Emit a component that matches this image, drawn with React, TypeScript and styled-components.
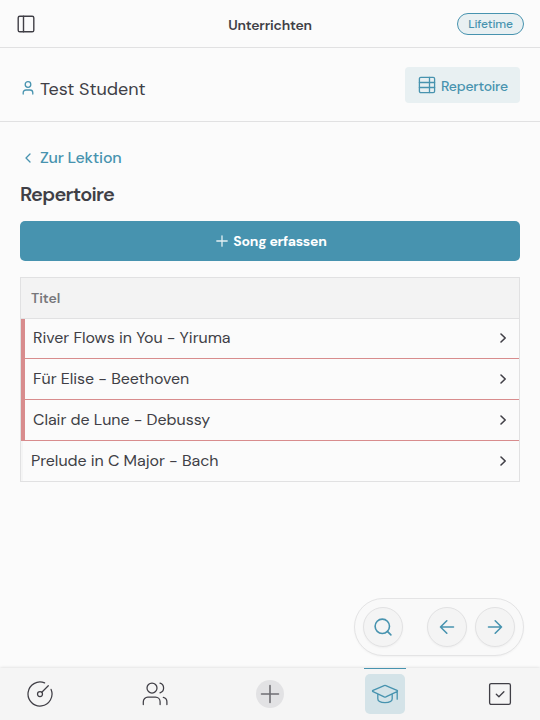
import React from "react";
import styled, { createGlobalStyle } from "styled-components";

const teal = "#4793af";
const ink = "#403f46";
const line = "#e1e1e2";

const GlobalStyle = createGlobalStyle`
  * { box-sizing: border-box; }
  body {
    margin: 0;
    background: #fbfbfb;
    color: ${ink};
    font-family: "DM Sans", Inter, "Liberation Sans", sans-serif;
  }
  button { font: inherit; color: inherit; border: 0; background: none; padding: 0; }
`;

const Page = styled.div`
  display: flex;
  flex-direction: column;
  height: 720px;
  width: 540px;
  overflow: hidden;
`;

const Label = styled.span<{ $size: number; $weight?: number; $spacing?: number; $color?: string; $drop?: number }>`
  font-size: ${(p) => p.$size}px;
  font-weight: ${(p) => p.$weight ?? 400};
  letter-spacing: ${(p) => p.$spacing ?? 0}px;
  color: ${(p) => p.$color ?? "inherit"};
  line-height: 20px;
  padding-top: ${(p) => p.$drop ?? 0}px;
  white-space: nowrap;
`;

const Icon = styled.svg<{ $color?: string; $stroke?: number }>`
  display: block;
  flex: none;
  fill: none;
  stroke: ${(p) => p.$color ?? ink};
  stroke-width: ${(p) => p.$stroke ?? 1.3};
  stroke-linecap: round;
  stroke-linejoin: round;
`;

const TopBar = styled.header`
  display: grid;
  grid-template-columns: 1fr auto 1fr;
  align-items: center;
  height: 48px;
  padding: 2px 16px 0;
  border-bottom: 1px solid ${line};
`;

const SidebarButton = styled.button`
  justify-self: start;
  margin-top: -1px;
`;

const Badge = styled.span`
  justify-self: end;
  display: flex;
  align-items: center;
  justify-content: center;
  width: 67px;
  height: 22px;
  margin-top: -2px;
  border: 1px solid ${teal};
  border-radius: 11px;
  background: #e9f0f2;
`;

const StudentBar = styled.section`
  display: flex;
  justify-content: space-between;
  height: 74px;
  padding: 19px 20px 0;
  border-bottom: 1px solid ${line};
`;

const StudentName = styled.div`
  display: flex;
  align-items: center;
  gap: 4px;
  height: 42px;
`;

const RepertoireButton = styled.button`
  display: flex;
  align-items: center;
  gap: 5px;
  width: 115px;
  height: 36px;
  padding-left: 13px;
  border-radius: 4px;
  background: #e8f0f2;
`;

const Content = styled.main`
  flex: 1;
  padding: 26px 20px 0;
`;

const BackLink = styled.a`
  display: flex;
  align-items: center;
  gap: 4px;
  height: 20px;
`;

const Heading = styled.h1`
  display: flex;
  align-items: center;
  margin: 15px 0 0;
  height: 22px;
`;

const AddButton = styled.button`
  display: flex;
  align-items: center;
  justify-content: center;
  gap: 4px;
  width: 100%;
  height: 40px;
  margin-top: 16px;
  padding-left: 2px;
  border-radius: 5px;
  background: ${teal};
`;

const Table = styled.div`
  margin-top: 16px;
  border: 1px solid ${line};
`;

const TableHead = styled.div`
  display: flex;
  align-items: center;
  height: 41px;
  padding: 0 10px 1px;
  border-bottom: 1px solid ${line};
  background: #f3f3f3;
`;

const TableRow = styled.div<{ $marked: boolean; $first: boolean }>`
  display: flex;
  align-items: center;
  justify-content: space-between;
  height: ${(p) => (p.$first || !p.$marked ? 40 : 41)}px;
  padding: 0 8px ${(p) => (p.$first ? 1 : 0)}px;
  border-left: ${(p) => (p.$marked ? "4px solid #d88c8d" : "2px solid #f5f5f5")};
  border-bottom: ${(p) => (p.$marked ? "1px solid #d88c8d" : "0")};
`;

const Dock = styled.div`
  align-self: flex-end;
  display: flex;
  align-items: center;
  width: 170px;
  height: 58px;
  margin: 0 16px 12px 0;
  padding: 0 8px;
  gap: 8px;
  border: 1px solid #e4e4e5;
  border-radius: 29px;
  background: #f9f9f9;
  box-shadow: 0 1px 2px rgba(0, 0, 0, 0.04);
`;

const RoundButton = styled.button<{ $gap?: boolean }>`
  display: flex;
  align-items: center;
  justify-content: center;
  flex: none;
  width: 40px;
  height: 40px;
  margin-right: ${(p) => (p.$gap ? 16 : 0)}px;
  border: 1px solid #e2e2e3;
  border-radius: 50%;
  background: #f4f4f4;
  box-shadow: 0 1px 2px rgba(0, 0, 0, 0.04);
`;

const TabBar = styled.nav`
  display: flex;
  justify-content: space-between;
  height: 52px;
  padding: 0 19px;
  background: #f5f5f5;
  box-shadow: 0 0 3px rgba(0, 0, 0, 0.16);
`;

const Tab = styled.button<{ $active?: boolean }>`
  display: flex;
  justify-content: center;
  width: 42px;
  height: 52px;
  padding-top: ${(p) => (p.$active ? 5 : 6)}px;
  border-top: ${(p) => (p.$active ? `1px solid ${teal}` : "0")};
`;

const TabFace = styled.span<{ $kind?: "active" | "add" }>`
  display: flex;
  align-items: center;
  justify-content: center;
  width: ${(p) => (p.$kind === "add" ? 28 : 40)}px;
  height: ${(p) => (p.$kind === "add" ? 28 : 40)}px;
  margin-top: ${(p) => (p.$kind === "add" ? 6 : 0)}px;
  border-radius: ${(p) => (p.$kind === "add" ? "50%" : "5px")};
  background: ${(p) => (p.$kind === "active" ? "#d4e3e8" : p.$kind === "add" ? "#e2e2e4" : "transparent")};
`;

const songs = [
  { title: "River Flows in You - Yiruma", marked: true },
  { title: "Für Elise - Beethoven", marked: true },
  { title: "Clair de Lune - Debussy", marked: true },
  { title: "Prelude in C Major - Bach", marked: false },
];

export default function App() {
  return (
    <>
      <GlobalStyle />
      <Page>
        <TopBar>
          <SidebarButton aria-label="Menu">
            <Icon width="20" height="20" viewBox="0 0 20 20" $stroke={1.4}>
              <rect x="2.2" y="2.2" width="15.6" height="15.6" rx="1.6" />
              <path d="M7.5 2.2v15.6" />
            </Icon>
          </SidebarButton>
          <Label $size={14} $weight={600} $spacing={-0.2} $drop={1}>Unterrichten</Label>
          <Badge><Label $size={12} $weight={500} $spacing={-0.15} $color={teal} $drop={1}>Lifetime</Label></Badge>
        </TopBar>

        <StudentBar>
          <StudentName>
            <Icon width="16" height="16" viewBox="0 0 16 16" $color={teal}>
              <circle cx="8" cy="4.5" r="2.8" />
              <path d="M3.2 14v-1.2a2.8 2.8 0 0 1 2.8-2.8h4a2.8 2.8 0 0 1 2.8 2.8V14" />
            </Icon>
            <Label $size={18} $spacing={-0.03} $drop={2}>Test Student</Label>
          </StudentName>
          <RepertoireButton>
            <Icon width="18" height="18" viewBox="0 0 18 18" $color={teal}>
              <rect x="1.4" y="1.4" width="15.2" height="15.2" rx="1.4" />
              <path d="M1.4 6.5h15.2M1.4 11.5h15.2M11.5 1.4v15.2" />
            </Icon>
            <Label $size={14} $weight={500} $spacing={-0.22} $color={teal} $drop={2}>Repertoire</Label>
          </RepertoireButton>
        </StudentBar>

        <Content>
          <BackLink>
            <Icon width="16" height="16" viewBox="0 0 16 16" $color={teal}>
              <path d="M10 4 6 8l4 4" />
            </Icon>
            <Label $size={16} $weight={500} $spacing={-0.22} $color={teal}>Zur Lektion</Label>
          </BackLink>
          <Heading><Label $size={20} $weight={600} $spacing={-0.72}>Repertoire</Label></Heading>
          <AddButton>
            <Icon width="14" height="14" viewBox="0 0 14 14" $color="#e4f0f3">
              <path d="M7 1.8v10.4M1.8 7h10.4" />
            </Icon>
            <Label $size={14} $weight={700} $spacing={-0.25} $color="#fff">Song erfassen</Label>
          </AddButton>
          <Table>
            <TableHead><Label $size={14} $weight={600} $spacing={-0.05} $color="#77777b">Titel</Label></TableHead>
            {songs.map((s, i) => (
              <TableRow key={s.title} $marked={s.marked} $first={i === 0}>
                <Label $size={16} $spacing={-0.04}>{s.title}</Label>
                <Icon width="16" height="16" viewBox="0 0 16 16" $stroke={1.6}>
                  <path d="m6 4 4.2 4L6 12" />
                </Icon>
              </TableRow>
            ))}
          </Table>
        </Content>

        <Dock>
          <RoundButton $gap aria-label="Suche">
            <Icon width="20" height="20" viewBox="0 0 20 20" $color={teal} $stroke={1.6}>
              <circle cx="9.3" cy="9.3" r="7.2" />
              <path d="m14.4 14.4 3.5 3.5" />
            </Icon>
          </RoundButton>
          <RoundButton aria-label="Zurück">
            <Icon width="20" height="20" viewBox="0 0 20 20" $color={teal} $stroke={1.6}>
              <path d="M16.5 10h-13M9.8 3.8 3.5 10l6.3 6.2" />
            </Icon>
          </RoundButton>
          <RoundButton aria-label="Weiter">
            <Icon width="20" height="20" viewBox="0 0 20 20" $color={teal} $stroke={1.6}>
              <path d="M3.5 10h13M10.2 3.8l6.3 6.2-6.3 6.2" />
            </Icon>
          </RoundButton>
        </Dock>

        <TabBar>
          <Tab>
            <TabFace>
              <Icon width="28" height="28" viewBox="0 0 28 28" $stroke={1.25}>
                <path d="M18.6 2.9A12 12 0 1 0 25.1 9.4" />
                <circle cx="14" cy="14" r="2.5" />
                <path d="m15.8 12.2 6.5-6.5" />
              </Icon>
            </TabFace>
          </Tab>
          <Tab>
            <TabFace>
              <Icon width="28" height="28" viewBox="0 0 28 28" $stroke={1.25}>
                <circle cx="11" cy="8" r="5" />
                <path d="M2.3 24.5v-2.8a4.6 4.6 0 0 1 4.6-4.6h7.6a4.6 4.6 0 0 1 4.6 4.6v2.8M19 3.2a5 5 0 0 1 0 9.6M22.3 17.3a4.6 4.6 0 0 1 3.6 4.5v2.7" />
              </Icon>
            </TabFace>
          </Tab>
          <Tab>
            <TabFace $kind="add">
              <Icon width="20" height="20" viewBox="0 0 20 20" $stroke={1.6} $color="#6f6e73">
                <path d="M10 1.5v17M1.5 10h17" />
              </Icon>
            </TabFace>
          </Tab>
          <Tab $active>
            <TabFace $kind="active">
              <Icon width="28" height="28" viewBox="0 0 28 28" $color={teal} $stroke={1.3}>
                <path d="M13.2 5.6q.8-.3 1.6 0l11.2 4.8q1 .6 0 1.3l-11.2 5.2q-.8.3-1.6 0L2 11.7q-1-.7 0-1.3zM6.8 14v4.8c0 2.3 3.2 3.8 7.2 3.8s7.2-1.5 7.2-3.8V14M26.2 11.2v8" />
              </Icon>
            </TabFace>
          </Tab>
          <Tab>
            <TabFace>
              <Icon width="24" height="24" viewBox="0 0 24 24" $stroke={1.3}>
                <rect x="1.6" y="1.6" width="20.8" height="20.8" rx="1.6" />
                <path d="m8.3 12.3 2.6 2.5 5-5" />
              </Icon>
            </TabFace>
          </Tab>
        </TabBar>
      </Page>
    </>
  );
}
